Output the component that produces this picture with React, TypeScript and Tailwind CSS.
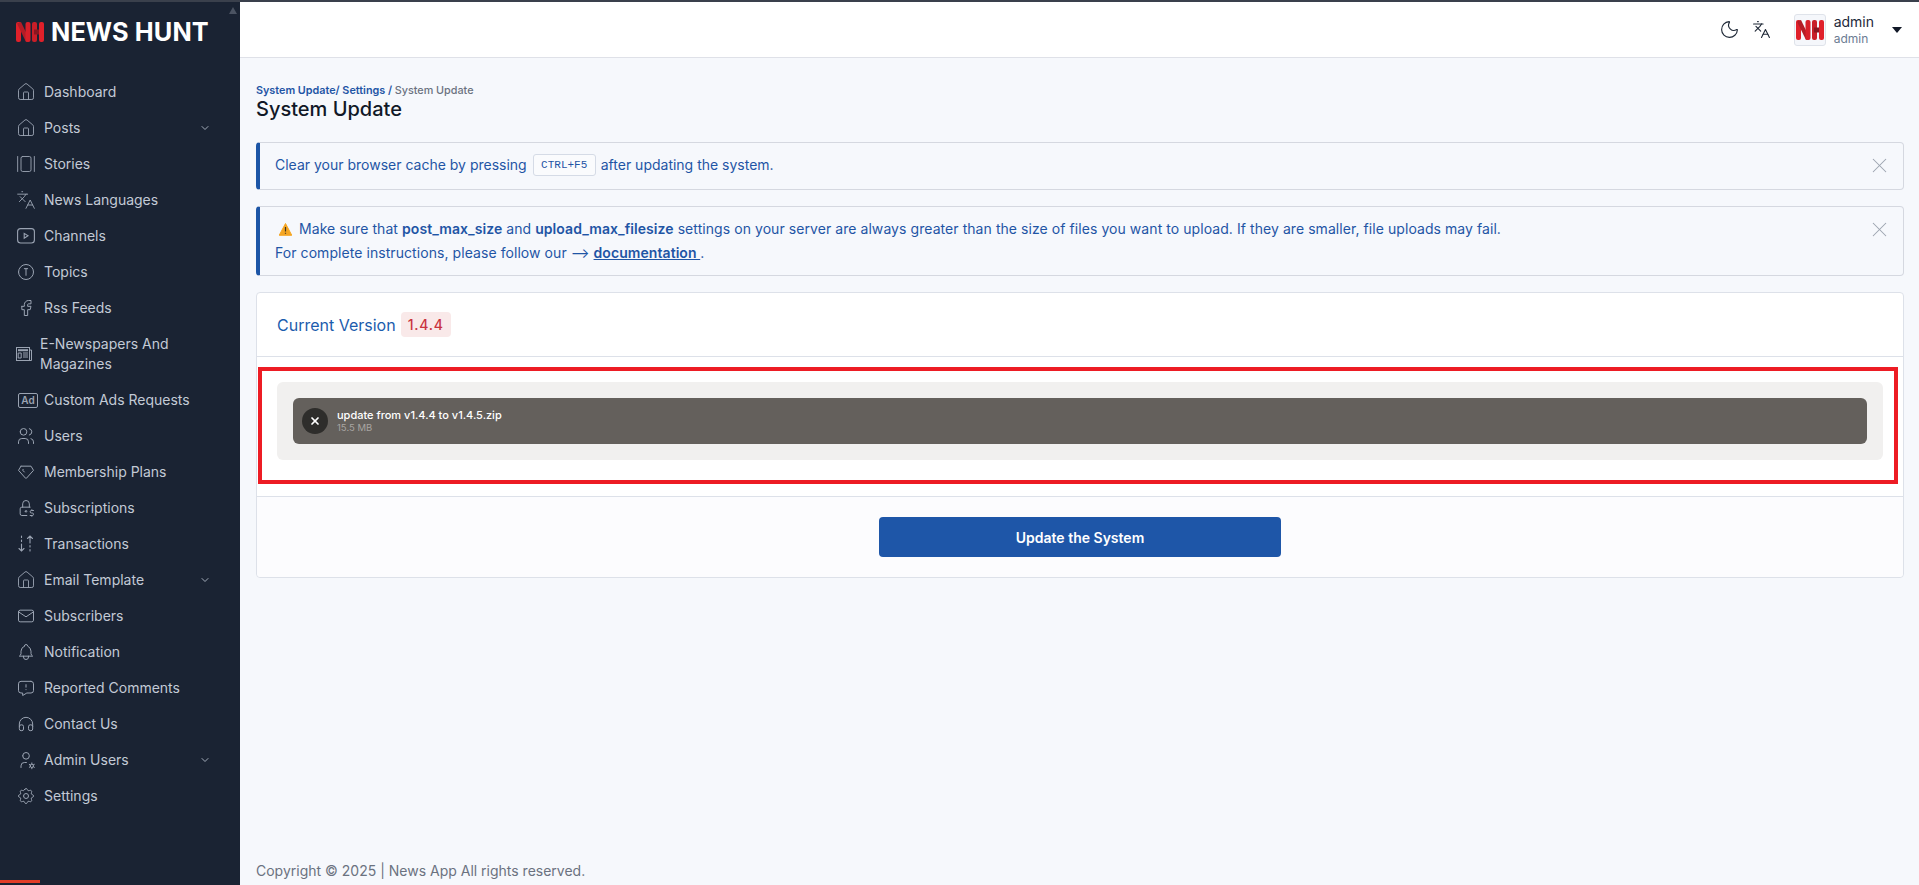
import React from 'react';
import { ChevronDown, GalleryHorizontal, House, Languages, Moon, X } from 'lucide-react';
import {
  TbBell,
  TbBrandFacebook,
  TbCircleLetterT,
  TbDiamond,
  TbHeadphones,
  TbLockDollar,
  TbMail,
  TbMessageReport,
  TbSettings,
  TbUserCog,
  TbUsers,
} from 'react-icons/tb';

const ChannelIcon = () => (
  <svg width="18" height="16" viewBox="0 0 18 16" fill="none" stroke="currentColor" strokeWidth="1.1">
    <rect x="0.6" y="0.6" width="16.8" height="14.4" rx="3" />
    <path d="M7.2 5.4 11 7.8 7.2 10.2Z" />
  </svg>
);

const NewsIcon = () => (
  <svg width="16" height="14" viewBox="0 0 16 14" fill="none" stroke="currentColor" strokeWidth="1">
    <rect x="0.5" y="0.5" width="13" height="13" />
    <path d="M14 3h1.5v10.5H14" />
    <rect x="2" y="2.2" width="10" height="2" fill="currentColor" stroke="none" />
    <path d="M2.2 6h3v5h-3zM7 6h5M7 8h5M7 10h5" />
  </svg>
);

const AdIcon = () => (
  <span className="ml-[4px] flex h-[15px] w-[20px] items-center justify-center rounded-[2px] border border-current text-[10px] leading-none font-semibold">
    Ad
  </span>
);

const TransferIcon = () => (
  <svg width="16" height="18" viewBox="0 0 16 18" fill="none" stroke="currentColor" strokeWidth="1.1" strokeLinecap="round">
    <path d="M3.5 1v1.5M3.5 5v1.5M3.5 9v7M1 13.5 3.5 16 6 13.5" />
    <path d="M12 16v-1.5M12 12v-1.5M12 8V1M9.5 3.5 12 1l2.5 2.5" />
  </svg>
);

// red NH mark, used for the logo and the avatar
const NhMark = ({ className }: { className: string }) => (
  <svg className={className} viewBox="0 0 28 20">
    <rect x="0" y="0" width="5" height="20" rx="2" fill="#e0202a" />
    <path d="M1 1.500 5 0 14 18.500 10 20Z" fill="#b41c26" />
    <rect x="9.500" y="0" width="5" height="20" rx="2" fill="#d81f29" />
    <rect x="16" y="0" width="5" height="20" rx="2" fill="#c91e28" />
    <rect x="18" y="7.500" width="8" height="5" fill="#8a1620" />
    <rect x="23" y="0" width="5" height="20" rx="2" fill="#e0202a" />
  </svg>
);

interface NavItem {
  label: string;
  icon: React.ReactNode;
  caret?: boolean;
  wrap?: boolean;
}

const tb = { size: 20, strokeWidth: 1.2 };
const lu = { size: 20, strokeWidth: 1.1 };

const navItems: NavItem[] = [
  { label: 'Dashboard', icon: <House {...lu} /> },
  { label: 'Posts', icon: <House {...lu} />, caret: true },
  { label: 'Stories', icon: <GalleryHorizontal {...lu} /> },
  { label: 'News Languages', icon: <Languages {...lu} /> },
  { label: 'Channels', icon: <ChannelIcon /> },
  { label: 'Topics', icon: <TbCircleLetterT {...tb} /> },
  { label: 'Rss Feeds', icon: <TbBrandFacebook {...tb} /> },
  { label: 'E-Newspapers And Magazines', icon: <NewsIcon />, wrap: true },
  { label: 'Custom Ads Requests', icon: <AdIcon /> },
  { label: 'Users', icon: <TbUsers {...tb} /> },
  { label: 'Membership Plans', icon: <TbDiamond {...tb} /> },
  { label: 'Subscriptions', icon: <TbLockDollar {...tb} /> },
  { label: 'Transactions', icon: <TransferIcon /> },
  { label: 'Email Template', icon: <House {...lu} />, caret: true },
  { label: 'Subscribers', icon: <TbMail {...tb} /> },
  { label: 'Notification', icon: <TbBell {...tb} /> },
  { label: 'Reported Comments', icon: <TbMessageReport {...tb} /> },
  { label: 'Contact Us', icon: <TbHeadphones {...tb} /> },
  { label: 'Admin Users', icon: <TbUserCog {...tb} />, caret: true },
  { label: 'Settings', icon: <TbSettings {...tb} /> },
];

const Sidebar = () => (
  <aside className="relative flex w-[240px] shrink-0 flex-col bg-[#1a2333]">
    <div className="absolute top-[5px] right-[3px] h-0 w-0 border-x-[4px] border-b-[7px] border-x-transparent border-b-[#4b5362]" />
    <div className="flex h-[50px] items-center pl-[16px] pt-[9px]">
      <NhMark className="h-[20px] w-[28px]" />
      <span className="ml-[7px] text-[25.3px] leading-none font-bold tracking-[0.1px] text-white">NEWS HUNT</span>
    </div>
    <nav className="mt-[22px] flex flex-col">
      {navItems.map((item) => (
        <div key={item.label} className="flex items-center py-2 text-[14px] leading-5 text-[#c3cad6]">
          {item.wrap ? (
            <div className="flex pl-[16px] pr-4 items-center text-[#9aa3b2]">
              <NewsIcon />
              <span className="ml-[8px] w-[180px] text-[#c3cad6]">{item.label}</span>
            </div>
          ) : (
            <>
              <span className="flex w-[44px] justify-center pl-[8px] text-[#9aa3b2]">{item.icon}</span>
              <span className="flex-1">{item.label}</span>
              {item.caret && <ChevronDown size={12} className="mr-[29px] text-[#a3acba]" />}
            </>
          )}
        </div>
      ))}
    </nav>
    <div className="absolute bottom-[2px] left-0 h-[3px] w-[40px] bg-[#e23d28]" />
  </aside>
);

const Header = () => (
  <header className="flex h-[56px] shrink-0 items-center justify-end border-b border-[#dfe1e8] bg-white pr-[17px]">
    <Moon size={21} strokeWidth={1.3} className="text-[#1f2937]" />
    <Languages size={19} strokeWidth={1.4} className="ml-[12px] text-[#1f2937]" />
    <div className="ml-[23px] flex h-[32px] w-[32px] items-center justify-center rounded-[3px] border border-[#dfe3ea] bg-[#f5f7fb]">
      <NhMark className="h-[20px] w-[28px]" />
    </div>
    <div className="ml-[8px] flex flex-col">
      <span className="text-[14px] leading-[18px] text-[#1e293b]">admin</span>
      <span className="text-[12px] leading-[15px] text-[#6b7c93]">admin</span>
    </div>
    <span className="ml-[18px] h-0 w-0 border-x-[5.5px] border-t-[6px] border-x-transparent border-t-[#111827]" />
  </header>
);

const AlertBox = ({ children, className }: { children: React.ReactNode; className: string }) => (
  <div className={`flex items-start justify-between rounded-[4px] border border-l-4 border-[#d5d8e0] border-l-[#1c55a6] bg-[#f6f8fc] pl-[15px] pr-[11px] text-[14px] text-[#1f55a5] ${className}`}>
    <div>{children}</div>
    <X size={25} strokeWidth={1} className="mt-[10px] text-[#9ca3af]" />
  </div>
);

const WarningIcon = () => (
  <svg className="mr-[7px] ml-[4px] inline-block align-[-2px]" width="13" height="13" viewBox="0 0 13 13">
    <path d="M6.500 .5 12.800 12.300H.2Z" fill="#f5a623" stroke="#f5a623" strokeLinejoin="round" />
    <path d="M6.500 4v4.500M6.500 9.800v1" stroke="#3f3320" strokeWidth="1.200" />
  </svg>
);

const UpdateCard = () => (
  <div className="mt-[16px] rounded-[4px] border border-[#dde1e9] bg-white">
    <div className="flex h-[64px] items-center border-b border-[#dde1e9] pl-[20px]">
      <span className="text-[16px] text-[#1c5cad]">Current Version</span>
      <span className="ml-[5px] rounded-[4px] bg-[#f9e9e9] px-[7px] py-[2px] text-[14px] font-medium tracking-[0.8px] text-[#c9333f]">1.4.4</span>
    </div>
    <div className="border-b border-[#dde1e9] pt-[10px] pr-[5px] pb-[12px] pl-[1px]">
      {/* red highlight from the screenshot */}
      <div className="border-4 border-[#ed1c24] pt-[11px] pr-[11px] pb-[20px] pl-[15px]">
        <div className="rounded-[6px] bg-[#f1f0ef] p-[16px]">
          <div className="flex h-[46px] items-center rounded-[6px] bg-[#64605c] pl-[9px]">
            <span className="flex h-[26px] w-[26px] items-center justify-center rounded-full bg-[#2e2d2b]">
              <X size={12} strokeWidth={3.5} className="text-white" />
            </span>
            <div className="ml-[9px] flex flex-col">
              <span className="text-[11px] leading-[14px] font-medium text-white">update from v1.4.4 to v1.4.5.zip</span>
              <span className="text-[9.5px] leading-[12px] text-[#a8a5a2]">15.5 MB</span>
            </div>
          </div>
        </div>
      </div>
    </div>
    <div className="flex justify-center rounded-b-[4px] bg-[#fcfcfe] py-[20px]">
      <button className="h-[40px] w-[402px] rounded-[4px] bg-[#1e56a8] text-[14px] font-semibold text-white">Update the System</button>
    </div>
  </div>
);

export default function App() {
  return (
    <div className="flex h-[885px] flex-col overflow-hidden bg-[#f6f8fc] font-['Inter',sans-serif]">
      <div className="h-[2px] shrink-0 bg-[#3a404c]" />
      <div className="flex min-h-0 flex-1">
        <Sidebar />
        <main className="flex min-w-0 flex-1 flex-col">
          <Header />
          <div className="flex flex-1 flex-col pr-[15px] pl-[16px]">
            <div className="pt-[26px] text-[10.8px] leading-[13px] font-semibold">
              <span className="text-[#1f55a5]">System Update/ Settings</span>
              <span className="text-[#1f55a5]"> / </span>
              <span className="font-medium text-[#6b7280]">System Update</span>
            </div>
            <h1 className="text-[20px] leading-[24px] font-medium text-[#111827]">System Update</h1>

            <AlertBox className="mt-[21px] h-[48px]">
              <div className="flex h-[43px] items-center">
                Clear your browser cache by pressing
                <kbd className="mr-[5px] ml-[6px] flex h-[22px] w-[63px] items-center justify-center rounded-[3px] border border-[#d5dbe6] bg-[#fafbfd] pt-[2px] font-['Liberation_Mono',monospace] text-[11px] text-[#1f55a5]">CTRL+F5</kbd>
                after updating the system.
              </div>
            </AlertBox>

            <AlertBox className="mt-[16px] h-[70px]">
              <div className="pt-[10px] leading-[24px] tracking-[0.065px]">
                <div>
                  <WarningIcon />
                  Make sure that <b className="font-semibold">post_max_size</b> and <b className="font-semibold">upload_max_filesize</b> settings on your server are always greater than the size of files you want to upload. If they are smaller, file uploads may fail.
                </div>
                <div>
                  For complete instructions, please follow our ⟶ <b className="font-semibold underline">documentation </b>.
                </div>
              </div>
            </AlertBox>

            <UpdateCard />

            <footer className="mt-auto pb-[4px] text-[14px] leading-5 text-[#6b7280]">Copyright © 2025 | News App All rights reserved.</footer>
          </div>
        </main>
      </div>
    </div>
  );
}
